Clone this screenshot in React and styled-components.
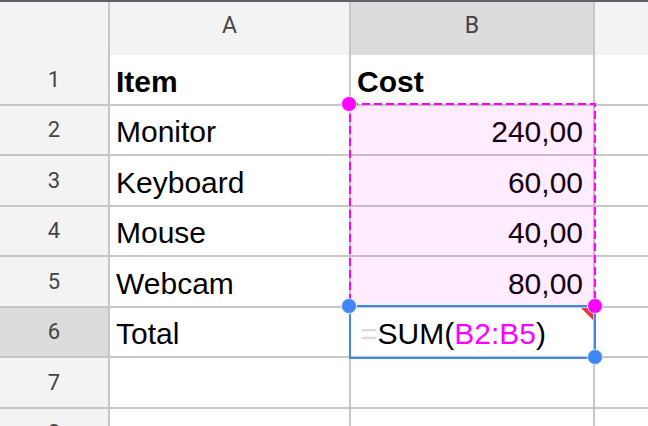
import React from 'react';
import styled, { createGlobalStyle } from 'styled-components';

const GlobalStyle = createGlobalStyle`
  html, body {
    margin: 0;
    padding: 0;
    background: #fff;
    overflow: hidden;
  }
  body {
    font-family: "Liberation Sans", Arial, sans-serif;
  }
`;

const GRID = '#c7c7c7';
const MAGENTA = '#ff00ff';
const BLUE = '#4285f4';

export const Sheet = styled.div`
  position: relative;
  width: 648px;
  height: 426px;
  overflow: hidden;
`;

export const TopBar = styled.div`
  height: 2px;
  background: #5f6165;
`;

export const HeaderRow = styled.div`
  display: flex;
  height: 53px;
  background: #f3f3f3;
`;

export const Corner = styled.div`
  width: 110px;
  flex: none;
  box-sizing: border-box;
  border-right: 2px solid ${GRID};
`;

export const ColHeader = styled.div`
  box-sizing: border-box;
  width: ${p => (p.$width ? p.$width + 'px' : 'auto')};
  flex: ${p => (p.$width ? 'none' : '1')};
  border-right: ${p => (p.$width ? `2px solid ${GRID}` : 'none')};
  background: ${p => (p.$active ? '#dcdcdc' : '#f3f3f3')};
  display: flex;
  align-items: center;
  justify-content: center;
  padding-bottom: 6px;
  font-family: Roboto, "Liberation Sans", sans-serif;
  font-size: 23px;
  color: #444;
`;

export const Row = styled.div`
  display: flex;
  height: 50.5px;
`;

export const RowHeader = styled.div`
  width: 110px;
  flex: none;
  box-sizing: border-box;
  border-right: 2px solid ${GRID};
  border-bottom: 2px solid ${GRID};
  background: ${p => (p.$active ? '#dcdcdc' : '#f3f3f3')};
  display: flex;
  align-items: center;
  justify-content: center;
  font-family: Roboto, "Liberation Sans", sans-serif;
  font-size: 22px;
  color: #444;
`;

export const Cell = styled.div`
  position: relative;
  box-sizing: border-box;
  width: ${p => (p.$width ? p.$width + 'px' : 'auto')};
  flex: ${p => (p.$width ? 'none' : '1')};
  border-right: ${p => (p.$width ? `2px solid ${GRID}` : 'none')};
  border-bottom: 2px solid ${GRID};
  display: flex;
  align-items: flex-end;
  justify-content: ${p => (p.$right ? 'flex-end' : 'flex-start')};
  padding: 0 ${p => (p.$right ? '10px' : '6px')} 5px ${p => (p.$pad || 6)}px;
  font-size: 30px;
  line-height: 34px;
  font-weight: ${p => (p.$bold ? 700 : 400)};
  color: #000;
  white-space: nowrap;
`;

const Eq = styled.span`
  color: #d9dadc;
`;

const Ref = styled.span`
  color: ${MAGENTA};
`;

const CornerMark = styled.div`
  position: absolute;
  top: 0;
  right: 0;
  width: 0;
  height: 0;
  border-top: 12px solid #e53935;
  border-left: 12px solid transparent;
`;

const RangeBox = styled.div`
  position: absolute;
  left: 349px;
  top: 103px;
  width: 247px;
  height: 204px;
  background: rgba(255, 0, 255, 0.075);
  pointer-events: none;
`;

const ActiveBox = styled.div`
  position: absolute;
  left: 349px;
  top: 305px;
  width: 247px;
  height: 54px;
  box-sizing: border-box;
  border: 2px solid ${BLUE};
  pointer-events: none;
`;

const Handle = styled.div`
  position: absolute;
  left: ${p => p.$x - 8}px;
  top: ${p => p.$y - 8}px;
  width: 16px;
  height: 16px;
  box-sizing: border-box;
  border-radius: 50%;
  background: ${p => p.$color};
  border: 1.5px solid ${p => (p.$color === BLUE ? '#dbe7fd' : '#ffdcff')};
`;

const rows = [
  { n: 1, item: 'Item', cost: 'Cost', head: true },
  { n: 2, item: 'Monitor', cost: '240,00' },
  { n: 3, item: 'Keyboard', cost: '60,00' },
  { n: 4, item: 'Mouse', cost: '40,00' },
  { n: 5, item: 'Webcam', cost: '80,00' },
];

export default function App() {
  return (
    <>
      <GlobalStyle />
      <Sheet>
        <TopBar />
        <HeaderRow>
          <Corner />
          <ColHeader $width={241}>A</ColHeader>
          <ColHeader $width={244} $active>B</ColHeader>
          <ColHeader />
        </HeaderRow>
        {rows.map(r => (
          <Row key={r.n}>
            <RowHeader>{r.n}</RowHeader>
            <Cell $width={241} $bold={r.head}>{r.item}</Cell>
            <Cell $width={244} $bold={r.head} $right={!r.head}>{r.cost}</Cell>
            <Cell />
          </Row>
        ))}
        <Row>
          <RowHeader $active>6</RowHeader>
          <Cell $width={241}>Total</Cell>
          <Cell $width={244} $pad={9}>
            <Eq>=</Eq>SUM(<Ref>B2:B5</Ref>)
            <CornerMark />
          </Cell>
          <Cell />
        </Row>
        <Row>
          <RowHeader>7</RowHeader>
          <Cell $width={241} />
          <Cell $width={244} />
          <Cell />
        </Row>
        <Row>
          <RowHeader>8</RowHeader>
          <Cell $width={241} />
          <Cell $width={244} />
          <Cell />
        </Row>

        <RangeBox>
          <svg width="247" height="204" style={{ display: 'block' }}>
            <rect x="1" y="1" width="245" height="202" fill="none"
              stroke={MAGENTA} strokeWidth="2" strokeDasharray="8 4" />
          </svg>
        </RangeBox>
        <ActiveBox />
        <Handle $x={349} $y={104} $color={MAGENTA} />
        <Handle $x={349} $y={306} $color={BLUE} />
        <Handle $x={595} $y={357} $color={BLUE} />
        <Handle $x={595} $y={306} $color={MAGENTA} />
      </Sheet>
    </>
  );
}
